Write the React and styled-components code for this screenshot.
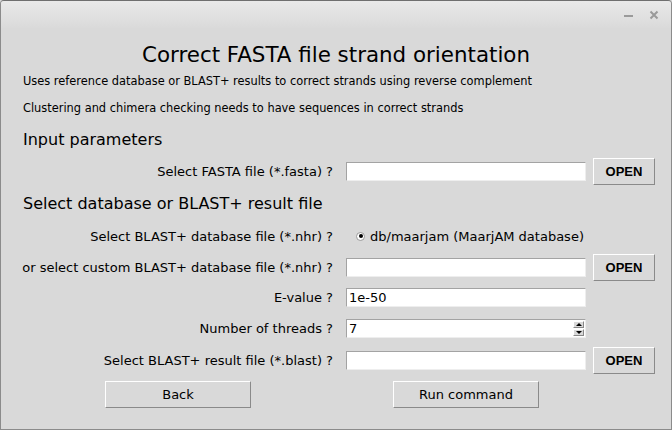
import styled, { createGlobalStyle } from "styled-components";

const GlobalStyle = createGlobalStyle`
  html, body {
    margin: 0;
    padding: 0;
    background: #d9d9d9;
  }
  * {
    box-sizing: border-box;
  }
`;

function App() {
  return (
    <>
      <GlobalStyle />
      <Window>
        <TitleBar>
          <Minimize />
          <CloseIcon viewBox="0 0 10 10">
            <path d="M1.5 1.5 L8.5 8.5 M8.5 1.5 L1.5 8.5" />
          </CloseIcon>
        </TitleBar>
        <Content>
          <Title>Correct FASTA file strand orientation</Title>
          <Note>Uses reference database or BLAST+ results to correct strands using reverse complement</Note>
          <Note gap={9}>Clustering and chimera checking needs to have sequences in correct strands</Note>
          <Form>
            <Heading>Input parameters</Heading>

            <Label>Select FASTA file (*.fasta) ?</Label>
            <Entry />
            <Button>OPEN</Button>

            <Heading>Select database or BLAST+ result file</Heading>

            <Label>Select BLAST+ database file (*.nhr) ?</Label>
            <RadioRow>
              <Radio />
              db/maarjam (MaarjAM database)
            </RadioRow>
            <span />

            <Label>or select custom BLAST+ database file (*.nhr) ?</Label>
            <Entry />
            <Button>OPEN</Button>

            <Label>E-value ?</Label>
            <Entry>1e-50</Entry>
            <span />

            <Label>Number of threads ?</Label>
            <Entry>
              7
              <Spin>
                <SpinArrow up />
                <SpinArrow />
              </Spin>
            </Entry>
            <span />

            <Label>Select BLAST+ result file (*.blast) ?</Label>
            <Entry />
            <Button>OPEN</Button>

            <WideButton side="left">Back</WideButton>
            <WideButton side="right">Run command</WideButton>
            <span />
          </Form>
        </Content>
      </Window>
    </>
  );
}

const Window = styled.div`
  width: 672px;
  height: 430px;
  border: 1px solid #8b8b8b;
  border-top-color: #6f6f6f;
  border-radius: 4px 4px 0 0;
  background: #d9d9d9;
  display: flex;
  flex-direction: column;
  font-family: "DejaVu Sans", sans-serif;
  color: #000;
  overflow: hidden;
`;

const TitleBar = styled.div`
  height: 27px;
  flex-shrink: 0;
  background: linear-gradient(#e9e9e9, #dadada);
  display: flex;
  align-items: center;
  justify-content: flex-end;
  gap: 16px;
  padding-right: 12px;
`;

const Minimize = styled.span`
  width: 9px;
  height: 2px;
  margin-top: 2px;
  background: #9a9a9a;
`;

const CloseIcon = styled.svg`
  width: 10px;
  height: 10px;
  stroke: #9a9a9a;
  stroke-width: 2;
  fill: none;
`;

const Content = styled.div`
  display: flex;
  flex-direction: column;
  padding-top: 8px;
`;

const Title = styled.div`
  height: 36px;
  display: flex;
  align-items: center;
  justify-content: center;
  font-size: 21.4px;
`;

const Note = styled.div`
  height: 18px;
  margin-top: ${(props) => props.gap || 0}px;
  padding-left: 22px;
  display: flex;
  align-items: center;
  font-size: 11.4px;
`;

const Form = styled.div`
  margin-top: 6px;
  display: grid;
  grid-template-columns: 345px 247px 63px;
  grid-template-rows: 32px 32px 33px 32px 30px 31px 31px 33px 34px;
  align-items: center;
`;

const Heading = styled.div`
  grid-column: 1 / -1;
  padding-left: 22px;
  font-size: 16px;
`;

const Label = styled.div`
  justify-self: end;
  padding-right: 13px;
  font-size: 13px;
`;

const Entry = styled.div`
  position: relative;
  width: 240px;
  height: 19px;
  background: #fff;
  border-top: 1px solid #a3a3a3;
  border-left: 1px solid #a3a3a3;
  border-bottom: 1px solid #eeeeee;
  border-right: 1px solid #eeeeee;
  font-size: 13px;
  line-height: 17px;
  padding-left: 2px;
`;

const Spin = styled.div`
  position: absolute;
  right: 1px;
  top: 1px;
  width: 11px;
  display: flex;
  flex-direction: column;
  gap: 1px;
`;

const SpinArrow = styled.div`
  height: 7px;
  background: #d9d9d9;
  border-top: 1px solid #fff;
  border-left: 1px solid #fff;
  border-bottom: 1px solid #888;
  border-right: 1px solid #888;
  display: flex;
  align-items: center;
  justify-content: center;
  &::after {
    content: "";
    border-left: 3px solid transparent;
    border-right: 3px solid transparent;
    ${(props) =>
      props.up ? "border-bottom: 3px solid #000;" : "border-top: 3px solid #000;"}
  }
`;

const RadioRow = styled.div`
  display: flex;
  align-items: center;
  gap: 5px;
  padding-left: 10px;
  font-size: 13px;
`;

const Radio = styled.span`
  width: 9px;
  height: 9px;
  border-radius: 50%;
  background: #fff;
  border: 1px solid #9a9a9a;
  display: flex;
  align-items: center;
  justify-content: center;
  &::after {
    content: "";
    width: 4px;
    height: 4px;
    border-radius: 50%;
    background: #000;
  }
`;

const RaisedButton = styled.div`
  background: #d9d9d9;
  border-top: 1px solid #fff;
  border-left: 1px solid #fff;
  border-bottom: 1px solid #8a8a8a;
  border-right: 1px solid #8a8a8a;
  display: flex;
  align-items: center;
  justify-content: center;
`;

const Button = styled(RaisedButton)`
  width: 62px;
  height: 27px;
  font-family: "Liberation Sans", Arial, sans-serif;
  font-weight: bold;
  font-size: 13px;
`;

const WideButton = styled(RaisedButton)`
  width: 146px;
  height: 27px;
  font-size: 13px;
  justify-self: ${(props) => (props.side === "left" ? "end" : "start")};
  margin-right: ${(props) => (props.side === "left" ? 95 : 0)}px;
  margin-left: ${(props) => (props.side === "right" ? 47 : 0)}px;
`;

export default App;
